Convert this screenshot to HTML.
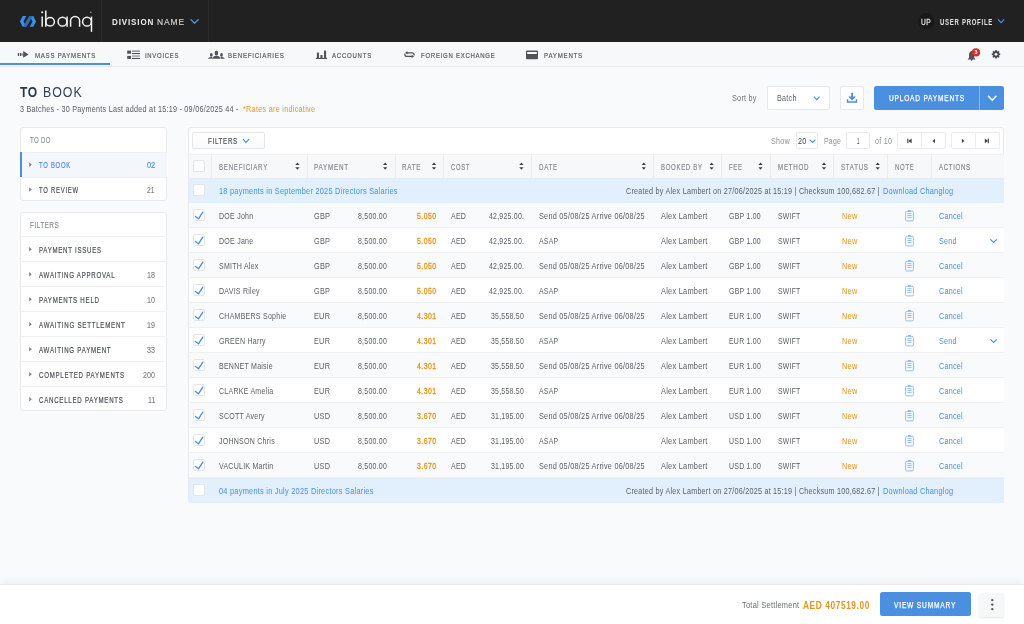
<!DOCTYPE html><html><head><meta charset="utf-8"><title>Mass Payments - To Book</title><style>
*{margin:0;padding:0;box-sizing:border-box}
html,body{width:1024px;height:624px;overflow:hidden}
body{position:relative;background:#f9fafc;font-family:"Liberation Sans",sans-serif}
#root{position:absolute;left:0;top:0;width:1024px;height:624px;will-change:transform}
.a{position:absolute}
.t{position:absolute;white-space:nowrap;transform-origin:0 0}
svg{position:absolute;left:0;top:0;overflow:visible}
</style></head><body><div id="root">
<div class="a" style="left:0px;top:0px;width:1024px;height:42px;background:#212121;"></div>
<div class="a" style="left:101px;top:0px;width:1px;height:42px;background:#2b2b2b;"></div>
<div class="a" style="left:208px;top:0px;width:1px;height:42px;background:#2b2b2b;"></div>
<svg width="1024" height="42">
<polygon points="22.7,16 26.3,16 23.5,21.4 26.3,26.8 22.7,26.8 19.9,21.4" fill="#3b8fe6"/>
<polygon points="29.7,16 33.3,16 36.1,21.4 33.3,26.8 29.7,26.8 32.5,21.4" fill="#3b8fe6"/>
<polygon points="29.2,16 32.8,16 26.6,26.8 23.0,26.8" fill="#2a6fbe"/>
<g fill="none" stroke="#f2f2f2" stroke-width="1.5">
<line x1="42.2" y1="16.4" x2="42.2" y2="26.8"/>
<line x1="45.8" y1="10.6" x2="45.8" y2="26.8"/>
<circle cx="50.1" cy="21.7" r="4.3"/>
<circle cx="62.5" cy="21.7" r="4.4"/>
<line x1="67.1" y1="16.6" x2="67.1" y2="26.8"/>
<path d="M70.6 26.8 V20.8 A4.5 4.4 0 0 1 79.6 20.8 V26.8"/>
<circle cx="87" cy="21.7" r="4.4"/>
<line x1="91.5" y1="16.6" x2="91.5" y2="31.8"/>
</g>
<circle cx="42.2" cy="12.2" r="1.05" fill="#f2f2f2"/>
<circle cx="90.8" cy="12.3" r="0.9" fill="#8a8a8a"/>
<polyline points="190.6,19.3 194.6,23.3 198.6,19.3" fill="none" stroke="#4a8fe0" stroke-width="1.4"/>
<circle cx="926.3" cy="21.3" r="8.2" fill="#191919"/>
<polyline points="998,19.4 1001.1,22.6 1004.2,19.4" fill="none" stroke="#4a8fe0" stroke-width="1.3"/>
</svg>
<div class="t" style="left:112.00px;top:12.00px;font-size:9.3px;line-height:20px;font-weight:bold;color:#ececec;letter-spacing:1.0px;transform:scaleX(0.8635)">DIVISION</div>
<div class="t" style="left:157.10px;top:12.00px;font-size:9.3px;line-height:20px;font-weight:normal;color:#d6d6d6;letter-spacing:1.0px;-webkit-text-stroke:0.15px #d6d6d6;transform:scaleX(0.9104)">NAME</div>
<div class="t" style="left:921.30px;top:12.00px;font-size:8.3px;line-height:20px;font-weight:normal;color:#dddddd;letter-spacing:0.6px;-webkit-text-stroke:0.3px #dddddd;transform:scaleX(0.7992)">UP</div>
<div class="t" style="left:939.70px;top:12.00px;font-size:8.3px;line-height:20px;font-weight:bold;color:#e2e2e2;letter-spacing:1.0px;transform:scaleX(0.7230)">USER PROFILE</div>
<div class="a" style="left:0px;top:42px;width:1024px;height:24px;background:#f7f8fa;"></div>
<div class="a" style="left:0px;top:66px;width:1024px;height:1px;background:#e8eaed;"></div>
<div class="a" style="left:0px;top:63px;width:110px;height:2px;background:#4a8fe0;"></div>
<div class="t" style="left:34.60px;top:46.00px;font-size:8.1px;line-height:20px;font-weight:normal;color:#54575c;letter-spacing:1.0px;-webkit-text-stroke:0.2px #54575c;transform:scaleX(0.7497)">MASS PAYMENTS</div>
<div class="t" style="left:144.60px;top:46.00px;font-size:8.1px;line-height:20px;font-weight:normal;color:#54575c;letter-spacing:1.0px;-webkit-text-stroke:0.2px #54575c;transform:scaleX(0.7306)">INVOICES</div>
<div class="t" style="left:227.60px;top:46.00px;font-size:8.1px;line-height:20px;font-weight:normal;color:#54575c;letter-spacing:1.0px;-webkit-text-stroke:0.2px #54575c;transform:scaleX(0.7575)">BENEFICIARIES</div>
<div class="t" style="left:332.20px;top:46.00px;font-size:8.1px;line-height:20px;font-weight:normal;color:#54575c;letter-spacing:1.0px;-webkit-text-stroke:0.2px #54575c;transform:scaleX(0.7472)">ACCOUNTS</div>
<div class="t" style="left:420.60px;top:46.00px;font-size:8.1px;line-height:20px;font-weight:normal;color:#54575c;letter-spacing:1.0px;-webkit-text-stroke:0.2px #54575c;transform:scaleX(0.7409)">FOREIGN EXCHANGE</div>
<div class="t" style="left:543.60px;top:46.00px;font-size:8.1px;line-height:20px;font-weight:normal;color:#54575c;letter-spacing:1.0px;-webkit-text-stroke:0.2px #54575c;transform:scaleX(0.7586)">PAYMENTS</div>
<svg width="1024" height="70">
<g fill="#505357">
<rect x="17.8" y="53.1" width="1.3" height="2.8" rx="0.5"/><rect x="19.9" y="53.1" width="1.3" height="2.8" rx="0.5"/><rect x="21.2" y="53.25" width="2.4" height="2.5" fill="#96999c"/>
<path d="M23.2 51.1 L28.6 54.45 L23.2 57.8 Z"/>
<rect x="127.2" y="50.6" width="3.8" height="3.1"/><rect x="127.2" y="55.9" width="3.8" height="3.0"/>
<rect x="132" y="50.6" width="7.9" height="1.1" opacity="0.85"/><rect x="132" y="53" width="7.9" height="1.1"/><rect x="132" y="55.4" width="7.9" height="1.3" opacity="0.6"/><rect x="132" y="57.9" width="7.9" height="1.1"/>
<ellipse cx="216.4" cy="53" rx="1.8" ry="2.5"/><path d="M212.1 58.8 Q212.6 56.1 216.4 55.7 Q220.2 56.1 220.7 58.8 Z"/>
<ellipse cx="211.3" cy="54.9" rx="1.4" ry="1.8"/><path d="M207.9 58.8 Q208.6 57 211.3 56.7 L212.4 56.9 L211.6 58.8 Z"/>
<ellipse cx="221.5" cy="54.9" rx="1.4" ry="1.8"/><path d="M224.9 58.8 Q224.2 57 221.5 56.7 L220.4 56.9 L221.2 58.8 Z"/>
<rect x="315.8" y="57.9" width="11.3" height="1.1"/><rect x="316.9" y="52.6" width="2.1" height="5.6" rx="0.5"/><rect x="320.4" y="55" width="2.1" height="3.2" rx="0.5"/><rect x="324" y="50.4" width="2.1" height="7.8" rx="0.5"/>
<path d="M526 51.6 Q526 50.6 527 50.6 L537 50.6 Q538 50.6 538 51.6 L538 58.2 Q538 59.2 537 59.2 L527 59.2 Q526 59.2 526 58.2 Z M527.2 52 L527.2 54 L536.8 54 L536.8 52 Z" fill-rule="evenodd"/>
<path d="M967.7 59.4 L969 57.8 V55.2 Q969 51.6 971.6 51.1 Q974.2 51.6 974.2 55.2 V57.8 L975.5 59.4 Z"/>
<circle cx="971.6" cy="59.7" r="0.95"/>
</g>
<g fill="none" stroke="#505357" stroke-width="1.2">
<path d="M414.1 55.6 V54.8 A2 2 0 0 0 412.1 52.8 H406.8"/>
<path d="M404.9 53.6 V54.4 A2 2 0 0 0 406.9 56.4 H412.3"/>
</g>
<path d="M405.1 52.8 L407.5 51.1 L407.5 54.5 Z M414.1 56.4 L411.7 54.7 L411.7 58.1 Z" fill="#505357"/>
<circle cx="976" cy="52.4" r="4.1" fill="#d82b2b"/>
<text x="976.1" y="54.3" font-size="5.4" font-weight="bold" fill="#fff" text-anchor="middle" font-family="Liberation Sans">3</text>
<g transform="translate(996 54.3)" fill="#45484c">
<circle r="3.0"/>
<rect x="-0.9" y="-4.2" width="1.8" height="8.4"/>
<rect x="-0.9" y="-4.2" width="1.8" height="8.4" transform="rotate(45)"/>
<rect x="-0.9" y="-4.2" width="1.8" height="8.4" transform="rotate(90)"/>
<rect x="-0.9" y="-4.2" width="1.8" height="8.4" transform="rotate(135)"/>
<circle r="1.4" fill="#f7f8fa"/>
</g>
</svg>
<div class="t" style="left:20.00px;top:82.00px;font-size:15.0px;line-height:20px;font-weight:bold;color:#28374a;letter-spacing:0.8px;transform:scaleX(0.8056)">TO</div>
<div class="t" style="left:43.40px;top:82.00px;font-size:15.0px;line-height:20px;font-weight:normal;color:#33435a;letter-spacing:1.2px;transform:scaleX(0.8243)">BOOK</div>
<div class="t" style="left:19.70px;top:99.00px;font-size:8.8px;line-height:20px;font-weight:normal;color:#575b60;letter-spacing:0.3px;transform:scaleX(0.8213)">3 Batches - 30 Payments Last added at 15:19 - 09/06/2025 44 -</div>
<div class="t" style="left:243.00px;top:99.00px;font-size:8.8px;line-height:20px;font-weight:normal;color:#e39a2a;letter-spacing:0.3px;transform:scaleX(0.8303)">*Rates are indicative</div>
<div class="t" style="left:732.40px;top:88.00px;font-size:8.8px;line-height:20px;font-weight:normal;color:#6b6f74;letter-spacing:0.3px;transform:scaleX(0.8256)">Sort by</div>
<div class="a" style="left:767px;top:86.2px;width:62.8px;height:24px;background:#fff;border:1px solid #e6e8eb;border-radius:2px"></div>
<div class="t" style="left:777.00px;top:88.00px;font-size:8.8px;line-height:20px;font-weight:normal;color:#5f6368;letter-spacing:0.3px;transform:scaleX(0.8226)">Batch</div>
<div class="a" style="left:840.3px;top:86.1px;width:24.2px;height:24px;background:#fff;border:1px solid #e6e8eb;border-radius:2px"></div>
<div class="a" style="left:874px;top:86px;width:130.3px;height:24px;background:#4a8fe0;border-radius:2.5px"></div>
<div class="a" style="left:979.4px;top:86px;width:1px;height:24px;background:#8ab8ee;"></div>
<div class="t" style="left:889.20px;top:88.00px;font-size:8.3px;line-height:20px;font-weight:normal;color:#ffffff;letter-spacing:1.0px;-webkit-text-stroke:0.25px #ffffff;transform:scaleX(0.7927)">UPLOAD PAYMENTS</div>
<svg width="1024" height="130">
<polyline points="813.8,96.6 816.7,99.7 819.6,96.6" fill="none" stroke="#4a8fe0" stroke-width="1.2"/>
<g fill="#4a8fe0"><rect x="851.2" y="92.8" width="1.8" height="4.6"/><path d="M848.2 96.6 L856 96.6 L852.1 100.6 Z"/><path d="M846.8 99.2 L848.3 99.2 L848.3 101.3 L855.7 101.3 L855.7 99.2 L857.2 99.2 L857.2 102.8 L846.8 102.8 Z"/></g>
<polyline points="988,95.8 992.2,100.2 996.4,95.8" fill="none" stroke="#fff" stroke-width="1.5"/>
</svg>
<div class="a" style="left:19.5px;top:127.4px;width:147.6px;height:74px;background:#fff;border:1px solid #e8eaed;border-radius:3px"></div>
<div class="a" style="left:20.5px;top:152px;width:146px;height:1px;background:#eef0f3;"></div>
<div class="a" style="left:20.5px;top:153px;width:146px;height:24px;background:#f3f7fc;"></div>
<div class="a" style="left:20px;top:152.2px;width:2px;height:24.8px;background:#4a8fe0;"></div>
<div class="a" style="left:20.5px;top:177px;width:146px;height:1px;background:#eef0f3;"></div>
<div class="t" style="left:29.50px;top:130.00px;font-size:8.4px;line-height:20px;font-weight:normal;color:#85898e;letter-spacing:0.5px;-webkit-text-stroke:0.1px #85898e;transform:scaleX(0.7208)">TO DO</div>
<svg width="200" height="420"><path d="M29.2 162.30 L31.8 164.60 L29.2 166.90 Z" fill="#7d8186"/></svg>
<div class="t" style="left:39.00px;top:156.00px;font-size:8.2px;line-height:20px;font-weight:normal;color:#4a8fe0;letter-spacing:1.0px;-webkit-text-stroke:0.2px #4a8fe0;transform:scaleX(0.7221)">TO BOOK</div>
<div class="t" style="left:146.80px;top:155.00px;font-size:8.4px;line-height:20px;font-weight:normal;color:#4a8fe0;letter-spacing:0px;-webkit-text-stroke:0.15px #4a8fe0;transform:scaleX(0.8775)">02</div>
<svg width="200" height="420"><path d="M29.2 187.20 L31.8 189.50 L29.2 191.80 Z" fill="#7d8186"/></svg>
<div class="t" style="left:39.00px;top:181.00px;font-size:8.2px;line-height:20px;font-weight:normal;color:#4e5257;letter-spacing:1.0px;-webkit-text-stroke:0.2px #4e5257;transform:scaleX(0.7260)">TO REVIEW</div>
<div class="t" style="left:147.00px;top:180.00px;font-size:8.4px;line-height:20px;font-weight:normal;color:#7b7f84;letter-spacing:0px;-webkit-text-stroke:0.1px #7b7f84;transform:scaleX(0.7919)">21</div>
<div class="a" style="left:19.5px;top:212.3px;width:147.6px;height:199px;background:#fff;border:1px solid #e8eaed;border-radius:3px"></div>
<div class="t" style="left:29.60px;top:215.00px;font-size:8.4px;line-height:20px;font-weight:normal;color:#85898e;letter-spacing:0.5px;-webkit-text-stroke:0.1px #85898e;transform:scaleX(0.7829)">FILTERS</div>
<div class="a" style="left:20.5px;top:236.1px;width:146px;height:1px;background:#eef0f3;"></div>
<svg width="200" height="420"><path d="M29.2 247.00 L31.8 249.30 L29.2 251.60 Z" fill="#7d8186"/></svg>
<div class="t" style="left:39.20px;top:241.00px;font-size:8.2px;line-height:20px;font-weight:normal;color:#4e5257;letter-spacing:1.0px;-webkit-text-stroke:0.2px #4e5257;transform:scaleX(0.7426)">PAYMENT ISSUES</div>
<div class="a" style="left:20.5px;top:261.1px;width:146px;height:1px;background:#eef0f3;"></div>
<svg width="200" height="420"><path d="M29.2 272.00 L31.8 274.30 L29.2 276.60 Z" fill="#7d8186"/></svg>
<div class="t" style="left:39.20px;top:266.00px;font-size:8.2px;line-height:20px;font-weight:normal;color:#4e5257;letter-spacing:1.0px;-webkit-text-stroke:0.2px #4e5257;transform:scaleX(0.7468)">AWAITING APPROVAL</div>
<div class="t" style="left:147.16px;top:265.00px;font-size:8.4px;line-height:20px;font-weight:normal;color:#7b7f84;letter-spacing:0px;-webkit-text-stroke:0.1px #7b7f84;transform:scaleX(0.8500)">18</div>
<div class="a" style="left:20.5px;top:286.1px;width:146px;height:1px;background:#eef0f3;"></div>
<svg width="200" height="420"><path d="M29.2 297.00 L31.8 299.30 L29.2 301.60 Z" fill="#7d8186"/></svg>
<div class="t" style="left:39.20px;top:291.00px;font-size:8.2px;line-height:20px;font-weight:normal;color:#4e5257;letter-spacing:1.0px;-webkit-text-stroke:0.2px #4e5257;transform:scaleX(0.7509)">PAYMENTS HELD</div>
<div class="t" style="left:147.16px;top:290.00px;font-size:8.4px;line-height:20px;font-weight:normal;color:#7b7f84;letter-spacing:0px;-webkit-text-stroke:0.1px #7b7f84;transform:scaleX(0.8500)">10</div>
<div class="a" style="left:20.5px;top:311.1px;width:146px;height:1px;background:#eef0f3;"></div>
<svg width="200" height="420"><path d="M29.2 322.00 L31.8 324.30 L29.2 326.60 Z" fill="#7d8186"/></svg>
<div class="t" style="left:39.20px;top:316.00px;font-size:8.2px;line-height:20px;font-weight:normal;color:#4e5257;letter-spacing:1.0px;-webkit-text-stroke:0.2px #4e5257;transform:scaleX(0.7515)">AWAITING SETTLEMENT</div>
<div class="t" style="left:147.16px;top:315.00px;font-size:8.4px;line-height:20px;font-weight:normal;color:#7b7f84;letter-spacing:0px;-webkit-text-stroke:0.1px #7b7f84;transform:scaleX(0.8500)">19</div>
<div class="a" style="left:20.5px;top:336.1px;width:146px;height:1px;background:#eef0f3;"></div>
<svg width="200" height="420"><path d="M29.2 347.00 L31.8 349.30 L29.2 351.60 Z" fill="#7d8186"/></svg>
<div class="t" style="left:39.20px;top:341.00px;font-size:8.2px;line-height:20px;font-weight:normal;color:#4e5257;letter-spacing:1.0px;-webkit-text-stroke:0.2px #4e5257;transform:scaleX(0.7498)">AWAITING PAYMENT</div>
<div class="t" style="left:147.16px;top:340.00px;font-size:8.4px;line-height:20px;font-weight:normal;color:#7b7f84;letter-spacing:0px;-webkit-text-stroke:0.1px #7b7f84;transform:scaleX(0.8500)">33</div>
<div class="a" style="left:20.5px;top:361.1px;width:146px;height:1px;background:#eef0f3;"></div>
<svg width="200" height="420"><path d="M29.2 372.00 L31.8 374.30 L29.2 376.60 Z" fill="#7d8186"/></svg>
<div class="t" style="left:39.20px;top:366.00px;font-size:8.2px;line-height:20px;font-weight:normal;color:#4e5257;letter-spacing:1.0px;-webkit-text-stroke:0.2px #4e5257;transform:scaleX(0.7461)">COMPLETED PAYMENTS</div>
<div class="t" style="left:143.19px;top:365.00px;font-size:8.4px;line-height:20px;font-weight:normal;color:#7b7f84;letter-spacing:0px;-webkit-text-stroke:0.1px #7b7f84;transform:scaleX(0.8500)">200</div>
<div class="a" style="left:20.5px;top:386.1px;width:146px;height:1px;background:#eef0f3;"></div>
<svg width="200" height="420"><path d="M29.2 397.00 L31.8 399.30 L29.2 401.60 Z" fill="#7d8186"/></svg>
<div class="t" style="left:39.20px;top:391.00px;font-size:8.2px;line-height:20px;font-weight:normal;color:#4e5257;letter-spacing:1.0px;-webkit-text-stroke:0.2px #4e5257;transform:scaleX(0.7474)">CANCELLED PAYMENTS</div>
<div class="t" style="left:147.69px;top:390.00px;font-size:8.4px;line-height:20px;font-weight:normal;color:#7b7f84;letter-spacing:0px;-webkit-text-stroke:0.1px #7b7f84;transform:scaleX(0.8500)">11</div>
<div class="a" style="left:187.5px;top:127.4px;width:816.8px;height:375.6px;background:#fff;border:1px solid #e8eaed;border-radius:3px"></div>
<div class="a" style="left:192.2px;top:132.2px;width:72.4px;height:16.9px;background:linear-gradient(#ffffff,#f9fafb);border:1px solid #e4e6e9;border-radius:2px"></div>
<div class="t" style="left:207.80px;top:131.00px;font-size:8.3px;line-height:20px;font-weight:normal;color:#4f5358;letter-spacing:1.0px;-webkit-text-stroke:0.2px #4f5358;transform:scaleX(0.7390)">FILTERS</div>
<svg width="1024" height="160"><polyline points="243,139.2 246,142.3 249,139.2" fill="none" stroke="#4a8fe0" stroke-width="1.2"/></svg>
<div class="t" style="left:770.90px;top:131.00px;font-size:8.8px;line-height:20px;font-weight:normal;color:#8d9196;letter-spacing:0.3px;transform:scaleX(0.8150)">Show</div>
<div class="a" style="left:795.5px;top:132.2px;width:22.9px;height:17.2px;background:#fff;border:1px solid #e8eaed;border-radius:2px"></div>
<div class="t" style="left:797.80px;top:131.00px;font-size:8.8px;line-height:20px;font-weight:normal;color:#3d4146;letter-spacing:0.3px;transform:scaleX(0.8127)">20</div>
<svg width="1024" height="160"><polyline points="809.6,139.6 812.5,142.5 815.4,139.6" fill="none" stroke="#4a8fe0" stroke-width="1.1"/></svg>
<div class="t" style="left:823.60px;top:131.00px;font-size:8.8px;line-height:20px;font-weight:normal;color:#8d9196;letter-spacing:0.3px;transform:scaleX(0.7880)">Page</div>
<div class="a" style="left:846.3px;top:132.2px;width:24.2px;height:17.2px;background:#fff;border:1px solid #e8eaed;border-radius:2px"></div>
<div class="t" style="left:857.00px;top:131.00px;font-size:8.8px;line-height:20px;font-weight:normal;color:#3d4146;letter-spacing:0.3px;transform:scaleX(0.4914)">1</div>
<div class="t" style="left:875.10px;top:131.00px;font-size:8.8px;line-height:20px;font-weight:normal;color:#8d9196;letter-spacing:0.3px;transform:scaleX(0.8133)">of 10</div>
<div class="a" style="left:897.3px;top:132.2px;width:48.700000000000045px;height:17.2px;background:#fff;border:1px solid #eaecef;border-radius:2px"></div>
<div class="a" style="left:921.4px;top:132.7px;width:1px;height:16.2px;background:#eaecef;"></div>
<div class="a" style="left:951.2px;top:132.2px;width:48.59999999999991px;height:17.2px;background:#fff;border:1px solid #eaecef;border-radius:2px"></div>
<div class="a" style="left:974.9px;top:132.7px;width:1px;height:16.2px;background:#eaecef;"></div>
<svg width="1024" height="160"><g fill="#3d4146">
<rect x="907.3" y="138.6" width="1.1" height="4.6"/><path d="M911.6 138.6 L908.3 140.9 L911.6 143.2 Z"/>
<path d="M935 138.8 L932.5 140.9 L935 143 Z"/>
<path d="M961.9 138.8 L964.4 140.9 L961.9 143 Z"/>
<path d="M984.8 138.6 L988.1 140.9 L984.8 143.2 Z"/><rect x="987.8" y="138.6" width="1.1" height="4.6"/>
</g></svg>
<div class="a" style="left:188.5px;top:154px;width:815px;height:24px;background:#f7f8fa;border-top:1px solid #eef0f3"></div>
<div class="a" style="left:210.5px;top:155px;width:1px;height:23px;background:#eaecef;"></div>
<div class="a" style="left:307.1px;top:155px;width:1px;height:23px;background:#eaecef;"></div>
<div class="a" style="left:394.5px;top:155px;width:1px;height:23px;background:#eaecef;"></div>
<div class="a" style="left:442.8px;top:155px;width:1px;height:23px;background:#eaecef;"></div>
<div class="a" style="left:531.2px;top:155px;width:1px;height:23px;background:#eaecef;"></div>
<div class="a" style="left:653.0px;top:155px;width:1px;height:23px;background:#eaecef;"></div>
<div class="a" style="left:720.9px;top:155px;width:1px;height:23px;background:#eaecef;"></div>
<div class="a" style="left:770.0px;top:155px;width:1px;height:23px;background:#eaecef;"></div>
<div class="a" style="left:833.2px;top:155px;width:1px;height:23px;background:#eaecef;"></div>
<div class="a" style="left:886.9px;top:155px;width:1px;height:23px;background:#eaecef;"></div>
<div class="a" style="left:931.1px;top:155px;width:1px;height:23px;background:#eaecef;"></div>
<div class="t" style="left:218.80px;top:157.00px;font-size:8.3px;line-height:20px;font-weight:normal;color:#878b90;letter-spacing:1.0px;-webkit-text-stroke:0.2px #878b90;transform:scaleX(0.7409)">BENEFICIARY</div>
<div class="t" style="left:314.40px;top:157.00px;font-size:8.3px;line-height:20px;font-weight:normal;color:#878b90;letter-spacing:1.0px;-webkit-text-stroke:0.2px #878b90;transform:scaleX(0.7619)">PAYMENT</div>
<div class="t" style="left:402.30px;top:157.00px;font-size:8.3px;line-height:20px;font-weight:normal;color:#878b90;letter-spacing:1.0px;-webkit-text-stroke:0.2px #878b90;transform:scaleX(0.7464)">RATE</div>
<div class="t" style="left:451.00px;top:157.00px;font-size:8.3px;line-height:20px;font-weight:normal;color:#878b90;letter-spacing:1.0px;-webkit-text-stroke:0.2px #878b90;transform:scaleX(0.7062)">COST</div>
<div class="t" style="left:539.00px;top:157.00px;font-size:8.3px;line-height:20px;font-weight:normal;color:#878b90;letter-spacing:1.0px;-webkit-text-stroke:0.2px #878b90;transform:scaleX(0.7382)">DATE</div>
<div class="t" style="left:660.90px;top:157.00px;font-size:8.3px;line-height:20px;font-weight:normal;color:#878b90;letter-spacing:1.0px;-webkit-text-stroke:0.2px #878b90;transform:scaleX(0.7207)">BOOKED BY</div>
<div class="t" style="left:729.20px;top:157.00px;font-size:8.3px;line-height:20px;font-weight:normal;color:#878b90;letter-spacing:1.0px;-webkit-text-stroke:0.2px #878b90;transform:scaleX(0.7165)">FEE</div>
<div class="t" style="left:777.80px;top:157.00px;font-size:8.3px;line-height:20px;font-weight:normal;color:#878b90;letter-spacing:1.0px;-webkit-text-stroke:0.2px #878b90;transform:scaleX(0.7446)">METHOD</div>
<div class="t" style="left:841.00px;top:157.00px;font-size:8.3px;line-height:20px;font-weight:normal;color:#878b90;letter-spacing:1.0px;-webkit-text-stroke:0.2px #878b90;transform:scaleX(0.7366)">STATUS</div>
<div class="t" style="left:895.00px;top:157.00px;font-size:8.3px;line-height:20px;font-weight:normal;color:#878b90;letter-spacing:1.0px;-webkit-text-stroke:0.2px #878b90;transform:scaleX(0.7216)">NOTE</div>
<div class="t" style="left:939.00px;top:157.00px;font-size:8.3px;line-height:20px;font-weight:normal;color:#878b90;letter-spacing:1.0px;-webkit-text-stroke:0.2px #878b90;transform:scaleX(0.7227)">ACTIONS</div>
<svg width="1024" height="180"><g fill="#3d4044"><path d="M295.30 165 L297.40 162.5 L299.50 165 Z"/><path d="M295.30 167.2 L297.40 169.7 L299.50 167.2 Z"/><path d="M383.10 165 L385.20 162.5 L387.30 165 Z"/><path d="M383.10 167.2 L385.20 169.7 L387.30 167.2 Z"/><path d="M431.90 165 L434.00 162.5 L436.10 165 Z"/><path d="M431.90 167.2 L434.00 169.7 L436.10 167.2 Z"/><path d="M519.30 165 L521.40 162.5 L523.50 165 Z"/><path d="M519.30 167.2 L521.40 169.7 L523.50 167.2 Z"/><path d="M641.70 165 L643.80 162.5 L645.90 165 Z"/><path d="M641.70 167.2 L643.80 169.7 L645.90 167.2 Z"/><path d="M709.50 165 L711.60 162.5 L713.70 165 Z"/><path d="M709.50 167.2 L711.60 169.7 L713.70 167.2 Z"/><path d="M758.40 165 L760.50 162.5 L762.60 165 Z"/><path d="M758.40 167.2 L760.50 169.7 L762.60 167.2 Z"/><path d="M821.90 165 L824.00 162.5 L826.10 165 Z"/><path d="M821.90 167.2 L824.00 169.7 L826.10 167.2 Z"/><path d="M875.60 165 L877.70 162.5 L879.80 165 Z"/><path d="M875.60 167.2 L877.70 169.7 L879.80 167.2 Z"/></g></svg>
<div class="a" style="left:193.4px;top:160.3px;width:12px;height:12px;background:#fff;border:1px solid #e3e5e8;border-radius:2px"></div>
<div class="a" style="left:188.5px;top:178px;width:815px;height:25px;background:#e2effc;border-top:1px solid #e4ebf3"></div>
<div class="a" style="left:193.4px;top:184.4px;width:12px;height:12px;background:#fff;border:1px solid #e3e5e8;border-radius:2px"></div>
<div class="t" style="left:219.40px;top:181.00px;font-size:8.8px;line-height:20px;font-weight:normal;color:#4a8fe0;letter-spacing:0.3px;transform:scaleX(0.8378)">18 payments in September 2025 Directors Salaries</div>
<div class="t" style="left:626.00px;top:181.00px;font-size:8.8px;line-height:20px;font-weight:normal;color:#5a5e63;letter-spacing:0.3px;transform:scaleX(0.8171)">Created by Alex Lambert on 27/06/2025 at 15:19 | Checksum 100,682.67 |</div>
<div class="t" style="left:883.10px;top:181.00px;font-size:8.8px;line-height:20px;font-weight:normal;color:#4a8fe0;letter-spacing:0.3px;transform:scaleX(0.8339)">Download Changlog</div>
<div class="a" style="left:188.5px;top:203px;width:815px;height:25px;background:#f9fafc;"></div>
<div class="a" style="left:188.5px;top:227px;width:815px;height:1px;background:#eef0f3;"></div>
<div class="a" style="left:193.4px;top:209.4px;width:12px;height:12px;background:#fff;border:1px solid #e3e5e8;border-radius:2px"></div>
<svg width="220" height="520"><polyline points="195.4,216.50 198.5,218.80 202.8,212.10" fill="none" stroke="#4a8fe0" stroke-width="1.35" stroke-linecap="round" stroke-linejoin="round"/></svg>
<div class="t" style="left:219.00px;top:206.00px;font-size:8.8px;line-height:20px;font-weight:normal;color:#5a5e63;letter-spacing:0.3px;transform:scaleX(0.8000)">DOE John</div>
<div class="t" style="left:314.40px;top:206.00px;font-size:8.8px;line-height:20px;font-weight:normal;color:#5a5e63;letter-spacing:0.3px;transform:scaleX(0.8286)">GBP</div>
<div class="t" style="left:358.40px;top:206.00px;font-size:8.8px;line-height:20px;font-weight:normal;color:#5a5e63;letter-spacing:0.3px;transform:scaleX(0.7922)">8,500.00</div>
<div class="t" style="left:417.40px;top:206.00px;font-size:8.8px;line-height:20px;font-weight:normal;color:#e3961f;letter-spacing:0.6px;-webkit-text-stroke:0.35px #e3961f;transform:scaleX(0.7821)">5.050</div>
<div class="t" style="left:451.00px;top:206.00px;font-size:8.8px;line-height:20px;font-weight:normal;color:#5a5e63;letter-spacing:0.3px;transform:scaleX(0.7921)">AED</div>
<div class="t" style="left:488.90px;top:206.00px;font-size:8.8px;line-height:20px;font-weight:normal;color:#5a5e63;letter-spacing:0.3px;transform:scaleX(0.7900)">42,925.00.</div>
<div class="t" style="left:538.70px;top:206.00px;font-size:8.8px;line-height:20px;font-weight:normal;color:#5a5e63;letter-spacing:0.3px;transform:scaleX(0.8296)">Send 05/08/25 Arrive 06/08/25</div>
<div class="t" style="left:661.10px;top:206.00px;font-size:8.8px;line-height:20px;font-weight:normal;color:#5a5e63;letter-spacing:0.3px;transform:scaleX(0.8413)">Alex Lambert</div>
<div class="t" style="left:729.00px;top:206.00px;font-size:8.8px;line-height:20px;font-weight:normal;color:#5a5e63;letter-spacing:0.3px;transform:scaleX(0.7900)">GBP 1.00</div>
<div class="t" style="left:777.70px;top:206.00px;font-size:8.8px;line-height:20px;font-weight:normal;color:#5a5e63;letter-spacing:0.3px;transform:scaleX(0.7806)">SWIFT</div>
<div class="t" style="left:841.50px;top:206.00px;font-size:8.8px;line-height:20px;font-weight:normal;color:#e3961f;letter-spacing:0.3px;transform:scaleX(0.8342)">New</div>
<div class="t" style="left:938.70px;top:206.00px;font-size:8.8px;line-height:20px;font-weight:normal;color:#4a8fe0;letter-spacing:0.3px;transform:scaleX(0.8200)">Cancel</div>
<div class="a" style="left:188.5px;top:228px;width:815px;height:25px;background:#ffffff;"></div>
<div class="a" style="left:188.5px;top:252px;width:815px;height:1px;background:#eef0f3;"></div>
<div class="a" style="left:193.4px;top:234.4px;width:12px;height:12px;background:#fff;border:1px solid #e3e5e8;border-radius:2px"></div>
<svg width="220" height="520"><polyline points="195.4,241.50 198.5,243.80 202.8,237.10" fill="none" stroke="#4a8fe0" stroke-width="1.35" stroke-linecap="round" stroke-linejoin="round"/></svg>
<div class="t" style="left:219.00px;top:231.00px;font-size:8.8px;line-height:20px;font-weight:normal;color:#5a5e63;letter-spacing:0.3px;transform:scaleX(0.8000)">DOE Jane</div>
<div class="t" style="left:314.40px;top:231.00px;font-size:8.8px;line-height:20px;font-weight:normal;color:#5a5e63;letter-spacing:0.3px;transform:scaleX(0.8286)">GBP</div>
<div class="t" style="left:358.40px;top:231.00px;font-size:8.8px;line-height:20px;font-weight:normal;color:#5a5e63;letter-spacing:0.3px;transform:scaleX(0.7922)">8,500.00</div>
<div class="t" style="left:417.40px;top:231.00px;font-size:8.8px;line-height:20px;font-weight:normal;color:#e3961f;letter-spacing:0.6px;-webkit-text-stroke:0.35px #e3961f;transform:scaleX(0.7821)">5.050</div>
<div class="t" style="left:451.00px;top:231.00px;font-size:8.8px;line-height:20px;font-weight:normal;color:#5a5e63;letter-spacing:0.3px;transform:scaleX(0.7921)">AED</div>
<div class="t" style="left:488.90px;top:231.00px;font-size:8.8px;line-height:20px;font-weight:normal;color:#5a5e63;letter-spacing:0.3px;transform:scaleX(0.7900)">42,925.00.</div>
<div class="t" style="left:538.70px;top:231.00px;font-size:8.8px;line-height:20px;font-weight:normal;color:#5a5e63;letter-spacing:0.3px;transform:scaleX(0.7836)">ASAP</div>
<div class="t" style="left:661.10px;top:231.00px;font-size:8.8px;line-height:20px;font-weight:normal;color:#5a5e63;letter-spacing:0.3px;transform:scaleX(0.8413)">Alex Lambert</div>
<div class="t" style="left:729.00px;top:231.00px;font-size:8.8px;line-height:20px;font-weight:normal;color:#5a5e63;letter-spacing:0.3px;transform:scaleX(0.7900)">GBP 1.00</div>
<div class="t" style="left:777.70px;top:231.00px;font-size:8.8px;line-height:20px;font-weight:normal;color:#5a5e63;letter-spacing:0.3px;transform:scaleX(0.7806)">SWIFT</div>
<div class="t" style="left:841.50px;top:231.00px;font-size:8.8px;line-height:20px;font-weight:normal;color:#e3961f;letter-spacing:0.3px;transform:scaleX(0.8342)">New</div>
<div class="t" style="left:938.70px;top:231.00px;font-size:8.8px;line-height:20px;font-weight:normal;color:#4a8fe0;letter-spacing:0.3px;transform:scaleX(0.8200)">Send</div>
<div class="a" style="left:188.5px;top:253px;width:815px;height:25px;background:#f9fafc;"></div>
<div class="a" style="left:188.5px;top:277px;width:815px;height:1px;background:#eef0f3;"></div>
<div class="a" style="left:193.4px;top:259.4px;width:12px;height:12px;background:#fff;border:1px solid #e3e5e8;border-radius:2px"></div>
<svg width="220" height="520"><polyline points="195.4,266.50 198.5,268.80 202.8,262.10" fill="none" stroke="#4a8fe0" stroke-width="1.35" stroke-linecap="round" stroke-linejoin="round"/></svg>
<div class="t" style="left:219.00px;top:256.00px;font-size:8.8px;line-height:20px;font-weight:normal;color:#5a5e63;letter-spacing:0.3px;transform:scaleX(0.8000)">SMITH Alex</div>
<div class="t" style="left:314.40px;top:256.00px;font-size:8.8px;line-height:20px;font-weight:normal;color:#5a5e63;letter-spacing:0.3px;transform:scaleX(0.8286)">GBP</div>
<div class="t" style="left:358.40px;top:256.00px;font-size:8.8px;line-height:20px;font-weight:normal;color:#5a5e63;letter-spacing:0.3px;transform:scaleX(0.7922)">8,500.00</div>
<div class="t" style="left:417.40px;top:256.00px;font-size:8.8px;line-height:20px;font-weight:normal;color:#e3961f;letter-spacing:0.6px;-webkit-text-stroke:0.35px #e3961f;transform:scaleX(0.7821)">5.050</div>
<div class="t" style="left:451.00px;top:256.00px;font-size:8.8px;line-height:20px;font-weight:normal;color:#5a5e63;letter-spacing:0.3px;transform:scaleX(0.7921)">AED</div>
<div class="t" style="left:488.90px;top:256.00px;font-size:8.8px;line-height:20px;font-weight:normal;color:#5a5e63;letter-spacing:0.3px;transform:scaleX(0.7900)">42,925.00.</div>
<div class="t" style="left:538.70px;top:256.00px;font-size:8.8px;line-height:20px;font-weight:normal;color:#5a5e63;letter-spacing:0.3px;transform:scaleX(0.8296)">Send 05/08/25 Arrive 06/08/25</div>
<div class="t" style="left:661.10px;top:256.00px;font-size:8.8px;line-height:20px;font-weight:normal;color:#5a5e63;letter-spacing:0.3px;transform:scaleX(0.8413)">Alex Lambert</div>
<div class="t" style="left:729.00px;top:256.00px;font-size:8.8px;line-height:20px;font-weight:normal;color:#5a5e63;letter-spacing:0.3px;transform:scaleX(0.7900)">GBP 1.00</div>
<div class="t" style="left:777.70px;top:256.00px;font-size:8.8px;line-height:20px;font-weight:normal;color:#5a5e63;letter-spacing:0.3px;transform:scaleX(0.7806)">SWIFT</div>
<div class="t" style="left:841.50px;top:256.00px;font-size:8.8px;line-height:20px;font-weight:normal;color:#e3961f;letter-spacing:0.3px;transform:scaleX(0.8342)">New</div>
<div class="t" style="left:938.70px;top:256.00px;font-size:8.8px;line-height:20px;font-weight:normal;color:#4a8fe0;letter-spacing:0.3px;transform:scaleX(0.8200)">Cancel</div>
<div class="a" style="left:188.5px;top:278px;width:815px;height:25px;background:#ffffff;"></div>
<div class="a" style="left:188.5px;top:302px;width:815px;height:1px;background:#eef0f3;"></div>
<div class="a" style="left:193.4px;top:284.4px;width:12px;height:12px;background:#fff;border:1px solid #e3e5e8;border-radius:2px"></div>
<svg width="220" height="520"><polyline points="195.4,291.50 198.5,293.80 202.8,287.10" fill="none" stroke="#4a8fe0" stroke-width="1.35" stroke-linecap="round" stroke-linejoin="round"/></svg>
<div class="t" style="left:219.00px;top:281.00px;font-size:8.8px;line-height:20px;font-weight:normal;color:#5a5e63;letter-spacing:0.3px;transform:scaleX(0.8000)">DAVIS Riley</div>
<div class="t" style="left:314.40px;top:281.00px;font-size:8.8px;line-height:20px;font-weight:normal;color:#5a5e63;letter-spacing:0.3px;transform:scaleX(0.8286)">GBP</div>
<div class="t" style="left:358.40px;top:281.00px;font-size:8.8px;line-height:20px;font-weight:normal;color:#5a5e63;letter-spacing:0.3px;transform:scaleX(0.7922)">8,500.00</div>
<div class="t" style="left:417.40px;top:281.00px;font-size:8.8px;line-height:20px;font-weight:normal;color:#e3961f;letter-spacing:0.6px;-webkit-text-stroke:0.35px #e3961f;transform:scaleX(0.7821)">5.050</div>
<div class="t" style="left:451.00px;top:281.00px;font-size:8.8px;line-height:20px;font-weight:normal;color:#5a5e63;letter-spacing:0.3px;transform:scaleX(0.7921)">AED</div>
<div class="t" style="left:488.90px;top:281.00px;font-size:8.8px;line-height:20px;font-weight:normal;color:#5a5e63;letter-spacing:0.3px;transform:scaleX(0.7900)">42,925.00.</div>
<div class="t" style="left:538.70px;top:281.00px;font-size:8.8px;line-height:20px;font-weight:normal;color:#5a5e63;letter-spacing:0.3px;transform:scaleX(0.7836)">ASAP</div>
<div class="t" style="left:661.10px;top:281.00px;font-size:8.8px;line-height:20px;font-weight:normal;color:#5a5e63;letter-spacing:0.3px;transform:scaleX(0.8413)">Alex Lambert</div>
<div class="t" style="left:729.00px;top:281.00px;font-size:8.8px;line-height:20px;font-weight:normal;color:#5a5e63;letter-spacing:0.3px;transform:scaleX(0.7900)">GBP 1.00</div>
<div class="t" style="left:777.70px;top:281.00px;font-size:8.8px;line-height:20px;font-weight:normal;color:#5a5e63;letter-spacing:0.3px;transform:scaleX(0.7806)">SWIFT</div>
<div class="t" style="left:841.50px;top:281.00px;font-size:8.8px;line-height:20px;font-weight:normal;color:#e3961f;letter-spacing:0.3px;transform:scaleX(0.8342)">New</div>
<div class="t" style="left:938.70px;top:281.00px;font-size:8.8px;line-height:20px;font-weight:normal;color:#4a8fe0;letter-spacing:0.3px;transform:scaleX(0.8200)">Cancel</div>
<div class="a" style="left:188.5px;top:303px;width:815px;height:25px;background:#f9fafc;"></div>
<div class="a" style="left:188.5px;top:327px;width:815px;height:1px;background:#eef0f3;"></div>
<div class="a" style="left:193.4px;top:309.4px;width:12px;height:12px;background:#fff;border:1px solid #e3e5e8;border-radius:2px"></div>
<svg width="220" height="520"><polyline points="195.4,316.50 198.5,318.80 202.8,312.10" fill="none" stroke="#4a8fe0" stroke-width="1.35" stroke-linecap="round" stroke-linejoin="round"/></svg>
<div class="t" style="left:219.00px;top:306.00px;font-size:8.8px;line-height:20px;font-weight:normal;color:#5a5e63;letter-spacing:0.3px;transform:scaleX(0.8000)">CHAMBERS Sophie</div>
<div class="t" style="left:314.40px;top:306.00px;font-size:8.8px;line-height:20px;font-weight:normal;color:#5a5e63;letter-spacing:0.3px;transform:scaleX(0.8300)">EUR</div>
<div class="t" style="left:358.40px;top:306.00px;font-size:8.8px;line-height:20px;font-weight:normal;color:#5a5e63;letter-spacing:0.3px;transform:scaleX(0.7922)">8,500.00</div>
<div class="t" style="left:417.40px;top:306.00px;font-size:8.8px;line-height:20px;font-weight:normal;color:#e3961f;letter-spacing:0.6px;-webkit-text-stroke:0.35px #e3961f;transform:scaleX(0.7821)">4.301</div>
<div class="t" style="left:451.00px;top:306.00px;font-size:8.8px;line-height:20px;font-weight:normal;color:#5a5e63;letter-spacing:0.3px;transform:scaleX(0.7921)">AED</div>
<div class="t" style="left:491.07px;top:306.00px;font-size:8.8px;line-height:20px;font-weight:normal;color:#5a5e63;letter-spacing:0.3px;transform:scaleX(0.7900)">35,558.50</div>
<div class="t" style="left:538.70px;top:306.00px;font-size:8.8px;line-height:20px;font-weight:normal;color:#5a5e63;letter-spacing:0.3px;transform:scaleX(0.8296)">Send 05/08/25 Arrive 06/08/25</div>
<div class="t" style="left:661.10px;top:306.00px;font-size:8.8px;line-height:20px;font-weight:normal;color:#5a5e63;letter-spacing:0.3px;transform:scaleX(0.8413)">Alex Lambert</div>
<div class="t" style="left:729.00px;top:306.00px;font-size:8.8px;line-height:20px;font-weight:normal;color:#5a5e63;letter-spacing:0.3px;transform:scaleX(0.7900)">EUR 1.00</div>
<div class="t" style="left:777.70px;top:306.00px;font-size:8.8px;line-height:20px;font-weight:normal;color:#5a5e63;letter-spacing:0.3px;transform:scaleX(0.7806)">SWIFT</div>
<div class="t" style="left:841.50px;top:306.00px;font-size:8.8px;line-height:20px;font-weight:normal;color:#e3961f;letter-spacing:0.3px;transform:scaleX(0.8342)">New</div>
<div class="t" style="left:938.70px;top:306.00px;font-size:8.8px;line-height:20px;font-weight:normal;color:#4a8fe0;letter-spacing:0.3px;transform:scaleX(0.8200)">Cancel</div>
<div class="a" style="left:188.5px;top:328px;width:815px;height:25px;background:#ffffff;"></div>
<div class="a" style="left:188.5px;top:352px;width:815px;height:1px;background:#eef0f3;"></div>
<div class="a" style="left:193.4px;top:334.4px;width:12px;height:12px;background:#fff;border:1px solid #e3e5e8;border-radius:2px"></div>
<svg width="220" height="520"><polyline points="195.4,341.50 198.5,343.80 202.8,337.10" fill="none" stroke="#4a8fe0" stroke-width="1.35" stroke-linecap="round" stroke-linejoin="round"/></svg>
<div class="t" style="left:219.00px;top:331.00px;font-size:8.8px;line-height:20px;font-weight:normal;color:#5a5e63;letter-spacing:0.3px;transform:scaleX(0.8000)">GREEN Harry</div>
<div class="t" style="left:314.40px;top:331.00px;font-size:8.8px;line-height:20px;font-weight:normal;color:#5a5e63;letter-spacing:0.3px;transform:scaleX(0.8300)">EUR</div>
<div class="t" style="left:358.40px;top:331.00px;font-size:8.8px;line-height:20px;font-weight:normal;color:#5a5e63;letter-spacing:0.3px;transform:scaleX(0.7922)">8,500.00</div>
<div class="t" style="left:417.40px;top:331.00px;font-size:8.8px;line-height:20px;font-weight:normal;color:#e3961f;letter-spacing:0.6px;-webkit-text-stroke:0.35px #e3961f;transform:scaleX(0.7821)">4.301</div>
<div class="t" style="left:451.00px;top:331.00px;font-size:8.8px;line-height:20px;font-weight:normal;color:#5a5e63;letter-spacing:0.3px;transform:scaleX(0.7921)">AED</div>
<div class="t" style="left:491.07px;top:331.00px;font-size:8.8px;line-height:20px;font-weight:normal;color:#5a5e63;letter-spacing:0.3px;transform:scaleX(0.7900)">35,558.50</div>
<div class="t" style="left:538.70px;top:331.00px;font-size:8.8px;line-height:20px;font-weight:normal;color:#5a5e63;letter-spacing:0.3px;transform:scaleX(0.7836)">ASAP</div>
<div class="t" style="left:661.10px;top:331.00px;font-size:8.8px;line-height:20px;font-weight:normal;color:#5a5e63;letter-spacing:0.3px;transform:scaleX(0.8413)">Alex Lambert</div>
<div class="t" style="left:729.00px;top:331.00px;font-size:8.8px;line-height:20px;font-weight:normal;color:#5a5e63;letter-spacing:0.3px;transform:scaleX(0.7900)">EUR 1.00</div>
<div class="t" style="left:777.70px;top:331.00px;font-size:8.8px;line-height:20px;font-weight:normal;color:#5a5e63;letter-spacing:0.3px;transform:scaleX(0.7806)">SWIFT</div>
<div class="t" style="left:841.50px;top:331.00px;font-size:8.8px;line-height:20px;font-weight:normal;color:#e3961f;letter-spacing:0.3px;transform:scaleX(0.8342)">New</div>
<div class="t" style="left:938.70px;top:331.00px;font-size:8.8px;line-height:20px;font-weight:normal;color:#4a8fe0;letter-spacing:0.3px;transform:scaleX(0.8200)">Send</div>
<div class="a" style="left:188.5px;top:353px;width:815px;height:25px;background:#f9fafc;"></div>
<div class="a" style="left:188.5px;top:377px;width:815px;height:1px;background:#eef0f3;"></div>
<div class="a" style="left:193.4px;top:359.4px;width:12px;height:12px;background:#fff;border:1px solid #e3e5e8;border-radius:2px"></div>
<svg width="220" height="520"><polyline points="195.4,366.50 198.5,368.80 202.8,362.10" fill="none" stroke="#4a8fe0" stroke-width="1.35" stroke-linecap="round" stroke-linejoin="round"/></svg>
<div class="t" style="left:219.00px;top:356.00px;font-size:8.8px;line-height:20px;font-weight:normal;color:#5a5e63;letter-spacing:0.3px;transform:scaleX(0.8000)">BENNET Maisie</div>
<div class="t" style="left:314.40px;top:356.00px;font-size:8.8px;line-height:20px;font-weight:normal;color:#5a5e63;letter-spacing:0.3px;transform:scaleX(0.8300)">EUR</div>
<div class="t" style="left:358.40px;top:356.00px;font-size:8.8px;line-height:20px;font-weight:normal;color:#5a5e63;letter-spacing:0.3px;transform:scaleX(0.7922)">8,500.00</div>
<div class="t" style="left:417.40px;top:356.00px;font-size:8.8px;line-height:20px;font-weight:normal;color:#e3961f;letter-spacing:0.6px;-webkit-text-stroke:0.35px #e3961f;transform:scaleX(0.7821)">4.301</div>
<div class="t" style="left:451.00px;top:356.00px;font-size:8.8px;line-height:20px;font-weight:normal;color:#5a5e63;letter-spacing:0.3px;transform:scaleX(0.7921)">AED</div>
<div class="t" style="left:491.07px;top:356.00px;font-size:8.8px;line-height:20px;font-weight:normal;color:#5a5e63;letter-spacing:0.3px;transform:scaleX(0.7900)">35,558.50</div>
<div class="t" style="left:538.70px;top:356.00px;font-size:8.8px;line-height:20px;font-weight:normal;color:#5a5e63;letter-spacing:0.3px;transform:scaleX(0.8296)">Send 05/08/25 Arrive 06/08/25</div>
<div class="t" style="left:661.10px;top:356.00px;font-size:8.8px;line-height:20px;font-weight:normal;color:#5a5e63;letter-spacing:0.3px;transform:scaleX(0.8413)">Alex Lambert</div>
<div class="t" style="left:729.00px;top:356.00px;font-size:8.8px;line-height:20px;font-weight:normal;color:#5a5e63;letter-spacing:0.3px;transform:scaleX(0.7900)">EUR 1.00</div>
<div class="t" style="left:777.70px;top:356.00px;font-size:8.8px;line-height:20px;font-weight:normal;color:#5a5e63;letter-spacing:0.3px;transform:scaleX(0.7806)">SWIFT</div>
<div class="t" style="left:841.50px;top:356.00px;font-size:8.8px;line-height:20px;font-weight:normal;color:#e3961f;letter-spacing:0.3px;transform:scaleX(0.8342)">New</div>
<div class="t" style="left:938.70px;top:356.00px;font-size:8.8px;line-height:20px;font-weight:normal;color:#4a8fe0;letter-spacing:0.3px;transform:scaleX(0.8200)">Cancel</div>
<div class="a" style="left:188.5px;top:378px;width:815px;height:25px;background:#ffffff;"></div>
<div class="a" style="left:188.5px;top:402px;width:815px;height:1px;background:#eef0f3;"></div>
<div class="a" style="left:193.4px;top:384.4px;width:12px;height:12px;background:#fff;border:1px solid #e3e5e8;border-radius:2px"></div>
<svg width="220" height="520"><polyline points="195.4,391.50 198.5,393.80 202.8,387.10" fill="none" stroke="#4a8fe0" stroke-width="1.35" stroke-linecap="round" stroke-linejoin="round"/></svg>
<div class="t" style="left:219.00px;top:381.00px;font-size:8.8px;line-height:20px;font-weight:normal;color:#5a5e63;letter-spacing:0.3px;transform:scaleX(0.8000)">CLARKE Amelia</div>
<div class="t" style="left:314.40px;top:381.00px;font-size:8.8px;line-height:20px;font-weight:normal;color:#5a5e63;letter-spacing:0.3px;transform:scaleX(0.8300)">EUR</div>
<div class="t" style="left:358.40px;top:381.00px;font-size:8.8px;line-height:20px;font-weight:normal;color:#5a5e63;letter-spacing:0.3px;transform:scaleX(0.7922)">8,500.00</div>
<div class="t" style="left:417.40px;top:381.00px;font-size:8.8px;line-height:20px;font-weight:normal;color:#e3961f;letter-spacing:0.6px;-webkit-text-stroke:0.35px #e3961f;transform:scaleX(0.7821)">4.301</div>
<div class="t" style="left:451.00px;top:381.00px;font-size:8.8px;line-height:20px;font-weight:normal;color:#5a5e63;letter-spacing:0.3px;transform:scaleX(0.7921)">AED</div>
<div class="t" style="left:491.07px;top:381.00px;font-size:8.8px;line-height:20px;font-weight:normal;color:#5a5e63;letter-spacing:0.3px;transform:scaleX(0.7900)">35,558.50</div>
<div class="t" style="left:538.70px;top:381.00px;font-size:8.8px;line-height:20px;font-weight:normal;color:#5a5e63;letter-spacing:0.3px;transform:scaleX(0.7836)">ASAP</div>
<div class="t" style="left:661.10px;top:381.00px;font-size:8.8px;line-height:20px;font-weight:normal;color:#5a5e63;letter-spacing:0.3px;transform:scaleX(0.8413)">Alex Lambert</div>
<div class="t" style="left:729.00px;top:381.00px;font-size:8.8px;line-height:20px;font-weight:normal;color:#5a5e63;letter-spacing:0.3px;transform:scaleX(0.7900)">EUR 1.00</div>
<div class="t" style="left:777.70px;top:381.00px;font-size:8.8px;line-height:20px;font-weight:normal;color:#5a5e63;letter-spacing:0.3px;transform:scaleX(0.7806)">SWIFT</div>
<div class="t" style="left:841.50px;top:381.00px;font-size:8.8px;line-height:20px;font-weight:normal;color:#e3961f;letter-spacing:0.3px;transform:scaleX(0.8342)">New</div>
<div class="t" style="left:938.70px;top:381.00px;font-size:8.8px;line-height:20px;font-weight:normal;color:#4a8fe0;letter-spacing:0.3px;transform:scaleX(0.8200)">Cancel</div>
<div class="a" style="left:188.5px;top:403px;width:815px;height:25px;background:#f9fafc;"></div>
<div class="a" style="left:188.5px;top:427px;width:815px;height:1px;background:#eef0f3;"></div>
<div class="a" style="left:193.4px;top:409.4px;width:12px;height:12px;background:#fff;border:1px solid #e3e5e8;border-radius:2px"></div>
<svg width="220" height="520"><polyline points="195.4,416.50 198.5,418.80 202.8,412.10" fill="none" stroke="#4a8fe0" stroke-width="1.35" stroke-linecap="round" stroke-linejoin="round"/></svg>
<div class="t" style="left:219.00px;top:406.00px;font-size:8.8px;line-height:20px;font-weight:normal;color:#5a5e63;letter-spacing:0.3px;transform:scaleX(0.8000)">SCOTT Avery</div>
<div class="t" style="left:314.40px;top:406.00px;font-size:8.8px;line-height:20px;font-weight:normal;color:#5a5e63;letter-spacing:0.3px;transform:scaleX(0.8300)">USD</div>
<div class="t" style="left:358.40px;top:406.00px;font-size:8.8px;line-height:20px;font-weight:normal;color:#5a5e63;letter-spacing:0.3px;transform:scaleX(0.7922)">8,500.00</div>
<div class="t" style="left:417.40px;top:406.00px;font-size:8.8px;line-height:20px;font-weight:normal;color:#e3961f;letter-spacing:0.6px;-webkit-text-stroke:0.35px #e3961f;transform:scaleX(0.7821)">3.670</div>
<div class="t" style="left:451.00px;top:406.00px;font-size:8.8px;line-height:20px;font-weight:normal;color:#5a5e63;letter-spacing:0.3px;transform:scaleX(0.7921)">AED</div>
<div class="t" style="left:491.07px;top:406.00px;font-size:8.8px;line-height:20px;font-weight:normal;color:#5a5e63;letter-spacing:0.3px;transform:scaleX(0.7900)">31,195.00</div>
<div class="t" style="left:538.70px;top:406.00px;font-size:8.8px;line-height:20px;font-weight:normal;color:#5a5e63;letter-spacing:0.3px;transform:scaleX(0.8296)">Send 05/08/25 Arrive 06/08/25</div>
<div class="t" style="left:661.10px;top:406.00px;font-size:8.8px;line-height:20px;font-weight:normal;color:#5a5e63;letter-spacing:0.3px;transform:scaleX(0.8413)">Alex Lambert</div>
<div class="t" style="left:729.00px;top:406.00px;font-size:8.8px;line-height:20px;font-weight:normal;color:#5a5e63;letter-spacing:0.3px;transform:scaleX(0.7900)">USD 1.00</div>
<div class="t" style="left:777.70px;top:406.00px;font-size:8.8px;line-height:20px;font-weight:normal;color:#5a5e63;letter-spacing:0.3px;transform:scaleX(0.7806)">SWIFT</div>
<div class="t" style="left:841.50px;top:406.00px;font-size:8.8px;line-height:20px;font-weight:normal;color:#e3961f;letter-spacing:0.3px;transform:scaleX(0.8342)">New</div>
<div class="t" style="left:938.70px;top:406.00px;font-size:8.8px;line-height:20px;font-weight:normal;color:#4a8fe0;letter-spacing:0.3px;transform:scaleX(0.8200)">Cancel</div>
<div class="a" style="left:188.5px;top:428px;width:815px;height:25px;background:#ffffff;"></div>
<div class="a" style="left:188.5px;top:452px;width:815px;height:1px;background:#eef0f3;"></div>
<div class="a" style="left:193.4px;top:434.4px;width:12px;height:12px;background:#fff;border:1px solid #e3e5e8;border-radius:2px"></div>
<svg width="220" height="520"><polyline points="195.4,441.50 198.5,443.80 202.8,437.10" fill="none" stroke="#4a8fe0" stroke-width="1.35" stroke-linecap="round" stroke-linejoin="round"/></svg>
<div class="t" style="left:219.00px;top:431.00px;font-size:8.8px;line-height:20px;font-weight:normal;color:#5a5e63;letter-spacing:0.3px;transform:scaleX(0.8000)">JOHNSON Chris</div>
<div class="t" style="left:314.40px;top:431.00px;font-size:8.8px;line-height:20px;font-weight:normal;color:#5a5e63;letter-spacing:0.3px;transform:scaleX(0.8300)">USD</div>
<div class="t" style="left:358.40px;top:431.00px;font-size:8.8px;line-height:20px;font-weight:normal;color:#5a5e63;letter-spacing:0.3px;transform:scaleX(0.7922)">8,500.00</div>
<div class="t" style="left:417.40px;top:431.00px;font-size:8.8px;line-height:20px;font-weight:normal;color:#e3961f;letter-spacing:0.6px;-webkit-text-stroke:0.35px #e3961f;transform:scaleX(0.7821)">3.670</div>
<div class="t" style="left:451.00px;top:431.00px;font-size:8.8px;line-height:20px;font-weight:normal;color:#5a5e63;letter-spacing:0.3px;transform:scaleX(0.7921)">AED</div>
<div class="t" style="left:491.07px;top:431.00px;font-size:8.8px;line-height:20px;font-weight:normal;color:#5a5e63;letter-spacing:0.3px;transform:scaleX(0.7900)">31,195.00</div>
<div class="t" style="left:538.70px;top:431.00px;font-size:8.8px;line-height:20px;font-weight:normal;color:#5a5e63;letter-spacing:0.3px;transform:scaleX(0.7836)">ASAP</div>
<div class="t" style="left:661.10px;top:431.00px;font-size:8.8px;line-height:20px;font-weight:normal;color:#5a5e63;letter-spacing:0.3px;transform:scaleX(0.8413)">Alex Lambert</div>
<div class="t" style="left:729.00px;top:431.00px;font-size:8.8px;line-height:20px;font-weight:normal;color:#5a5e63;letter-spacing:0.3px;transform:scaleX(0.7900)">USD 1.00</div>
<div class="t" style="left:777.70px;top:431.00px;font-size:8.8px;line-height:20px;font-weight:normal;color:#5a5e63;letter-spacing:0.3px;transform:scaleX(0.7806)">SWIFT</div>
<div class="t" style="left:841.50px;top:431.00px;font-size:8.8px;line-height:20px;font-weight:normal;color:#e3961f;letter-spacing:0.3px;transform:scaleX(0.8342)">New</div>
<div class="t" style="left:938.70px;top:431.00px;font-size:8.8px;line-height:20px;font-weight:normal;color:#4a8fe0;letter-spacing:0.3px;transform:scaleX(0.8200)">Cancel</div>
<div class="a" style="left:188.5px;top:453px;width:815px;height:25px;background:#f9fafc;"></div>
<div class="a" style="left:188.5px;top:477px;width:815px;height:1px;background:#eef0f3;"></div>
<div class="a" style="left:193.4px;top:459.4px;width:12px;height:12px;background:#fff;border:1px solid #e3e5e8;border-radius:2px"></div>
<svg width="220" height="520"><polyline points="195.4,466.50 198.5,468.80 202.8,462.10" fill="none" stroke="#4a8fe0" stroke-width="1.35" stroke-linecap="round" stroke-linejoin="round"/></svg>
<div class="t" style="left:219.00px;top:456.00px;font-size:8.8px;line-height:20px;font-weight:normal;color:#5a5e63;letter-spacing:0.3px;transform:scaleX(0.8000)">VACULIK Martin</div>
<div class="t" style="left:314.40px;top:456.00px;font-size:8.8px;line-height:20px;font-weight:normal;color:#5a5e63;letter-spacing:0.3px;transform:scaleX(0.8300)">USD</div>
<div class="t" style="left:358.40px;top:456.00px;font-size:8.8px;line-height:20px;font-weight:normal;color:#5a5e63;letter-spacing:0.3px;transform:scaleX(0.7922)">8,500.00</div>
<div class="t" style="left:417.40px;top:456.00px;font-size:8.8px;line-height:20px;font-weight:normal;color:#e3961f;letter-spacing:0.6px;-webkit-text-stroke:0.35px #e3961f;transform:scaleX(0.7821)">3.670</div>
<div class="t" style="left:451.00px;top:456.00px;font-size:8.8px;line-height:20px;font-weight:normal;color:#5a5e63;letter-spacing:0.3px;transform:scaleX(0.7921)">AED</div>
<div class="t" style="left:491.07px;top:456.00px;font-size:8.8px;line-height:20px;font-weight:normal;color:#5a5e63;letter-spacing:0.3px;transform:scaleX(0.7900)">31,195.00</div>
<div class="t" style="left:538.70px;top:456.00px;font-size:8.8px;line-height:20px;font-weight:normal;color:#5a5e63;letter-spacing:0.3px;transform:scaleX(0.8296)">Send 05/08/25 Arrive 06/08/25</div>
<div class="t" style="left:661.10px;top:456.00px;font-size:8.8px;line-height:20px;font-weight:normal;color:#5a5e63;letter-spacing:0.3px;transform:scaleX(0.8413)">Alex Lambert</div>
<div class="t" style="left:729.00px;top:456.00px;font-size:8.8px;line-height:20px;font-weight:normal;color:#5a5e63;letter-spacing:0.3px;transform:scaleX(0.7900)">USD 1.00</div>
<div class="t" style="left:777.70px;top:456.00px;font-size:8.8px;line-height:20px;font-weight:normal;color:#5a5e63;letter-spacing:0.3px;transform:scaleX(0.7806)">SWIFT</div>
<div class="t" style="left:841.50px;top:456.00px;font-size:8.8px;line-height:20px;font-weight:normal;color:#e3961f;letter-spacing:0.3px;transform:scaleX(0.8342)">New</div>
<div class="t" style="left:938.70px;top:456.00px;font-size:8.8px;line-height:20px;font-weight:normal;color:#4a8fe0;letter-spacing:0.3px;transform:scaleX(0.8200)">Cancel</div>
<svg width="1024" height="520"><g fill="none" stroke="#8dbaee" stroke-width="0.95"><rect x="905.6" y="211.30" width="7.8" height="9.6" rx="1.2"/><line x1="907.4" y1="213.70" x2="911.6" y2="213.70"/><line x1="907.4" y1="215.50" x2="911.6" y2="215.50"/><line x1="907.4" y1="217.40" x2="911.6" y2="217.40"/></g><rect x="908" y="210.00" width="2.9" height="1.6" fill="#8dbaee"/><g fill="none" stroke="#8dbaee" stroke-width="0.95"><rect x="905.6" y="236.30" width="7.8" height="9.6" rx="1.2"/><line x1="907.4" y1="238.70" x2="911.6" y2="238.70"/><line x1="907.4" y1="240.50" x2="911.6" y2="240.50"/><line x1="907.4" y1="242.40" x2="911.6" y2="242.40"/></g><rect x="908" y="235.00" width="2.9" height="1.6" fill="#8dbaee"/><polyline points="990.4,239.30 993.6,242.40 996.8,239.30" fill="none" stroke="#4a8fe0" stroke-width="1.15"/><g fill="none" stroke="#8dbaee" stroke-width="0.95"><rect x="905.6" y="261.30" width="7.8" height="9.6" rx="1.2"/><line x1="907.4" y1="263.70" x2="911.6" y2="263.70"/><line x1="907.4" y1="265.50" x2="911.6" y2="265.50"/><line x1="907.4" y1="267.40" x2="911.6" y2="267.40"/></g><rect x="908" y="260.00" width="2.9" height="1.6" fill="#8dbaee"/><g fill="none" stroke="#8dbaee" stroke-width="0.95"><rect x="905.6" y="286.30" width="7.8" height="9.6" rx="1.2"/><line x1="907.4" y1="288.70" x2="911.6" y2="288.70"/><line x1="907.4" y1="290.50" x2="911.6" y2="290.50"/><line x1="907.4" y1="292.40" x2="911.6" y2="292.40"/></g><rect x="908" y="285.00" width="2.9" height="1.6" fill="#8dbaee"/><g fill="none" stroke="#8dbaee" stroke-width="0.95"><rect x="905.6" y="311.30" width="7.8" height="9.6" rx="1.2"/><line x1="907.4" y1="313.70" x2="911.6" y2="313.70"/><line x1="907.4" y1="315.50" x2="911.6" y2="315.50"/><line x1="907.4" y1="317.40" x2="911.6" y2="317.40"/></g><rect x="908" y="310.00" width="2.9" height="1.6" fill="#8dbaee"/><g fill="none" stroke="#8dbaee" stroke-width="0.95"><rect x="905.6" y="336.30" width="7.8" height="9.6" rx="1.2"/><line x1="907.4" y1="338.70" x2="911.6" y2="338.70"/><line x1="907.4" y1="340.50" x2="911.6" y2="340.50"/><line x1="907.4" y1="342.40" x2="911.6" y2="342.40"/></g><rect x="908" y="335.00" width="2.9" height="1.6" fill="#8dbaee"/><polyline points="990.4,339.30 993.6,342.40 996.8,339.30" fill="none" stroke="#4a8fe0" stroke-width="1.15"/><g fill="none" stroke="#8dbaee" stroke-width="0.95"><rect x="905.6" y="361.30" width="7.8" height="9.6" rx="1.2"/><line x1="907.4" y1="363.70" x2="911.6" y2="363.70"/><line x1="907.4" y1="365.50" x2="911.6" y2="365.50"/><line x1="907.4" y1="367.40" x2="911.6" y2="367.40"/></g><rect x="908" y="360.00" width="2.9" height="1.6" fill="#8dbaee"/><g fill="none" stroke="#8dbaee" stroke-width="0.95"><rect x="905.6" y="386.30" width="7.8" height="9.6" rx="1.2"/><line x1="907.4" y1="388.70" x2="911.6" y2="388.70"/><line x1="907.4" y1="390.50" x2="911.6" y2="390.50"/><line x1="907.4" y1="392.40" x2="911.6" y2="392.40"/></g><rect x="908" y="385.00" width="2.9" height="1.6" fill="#8dbaee"/><g fill="none" stroke="#8dbaee" stroke-width="0.95"><rect x="905.6" y="411.30" width="7.8" height="9.6" rx="1.2"/><line x1="907.4" y1="413.70" x2="911.6" y2="413.70"/><line x1="907.4" y1="415.50" x2="911.6" y2="415.50"/><line x1="907.4" y1="417.40" x2="911.6" y2="417.40"/></g><rect x="908" y="410.00" width="2.9" height="1.6" fill="#8dbaee"/><g fill="none" stroke="#8dbaee" stroke-width="0.95"><rect x="905.6" y="436.30" width="7.8" height="9.6" rx="1.2"/><line x1="907.4" y1="438.70" x2="911.6" y2="438.70"/><line x1="907.4" y1="440.50" x2="911.6" y2="440.50"/><line x1="907.4" y1="442.40" x2="911.6" y2="442.40"/></g><rect x="908" y="435.00" width="2.9" height="1.6" fill="#8dbaee"/><g fill="none" stroke="#8dbaee" stroke-width="0.95"><rect x="905.6" y="461.30" width="7.8" height="9.6" rx="1.2"/><line x1="907.4" y1="463.70" x2="911.6" y2="463.70"/><line x1="907.4" y1="465.50" x2="911.6" y2="465.50"/><line x1="907.4" y1="467.40" x2="911.6" y2="467.40"/></g><rect x="908" y="460.00" width="2.9" height="1.6" fill="#8dbaee"/></svg>
<div class="a" style="left:188.5px;top:478px;width:815px;height:25px;background:#e2effc;border-top:1px solid #e4ebf3"></div>
<div class="a" style="left:193.4px;top:484.4px;width:12px;height:12px;background:#fff;border:1px solid #e3e5e8;border-radius:2px"></div>
<div class="t" style="left:219.40px;top:481.00px;font-size:8.8px;line-height:20px;font-weight:normal;color:#4a8fe0;letter-spacing:0.3px;transform:scaleX(0.8380)">04 payments in July 2025 Directors Salaries</div>
<div class="t" style="left:626.00px;top:481.00px;font-size:8.8px;line-height:20px;font-weight:normal;color:#5a5e63;letter-spacing:0.3px;transform:scaleX(0.8171)">Created by Alex Lambert on 27/06/2025 at 15:19 | Checksum 100,682.67 |</div>
<div class="t" style="left:883.10px;top:481.00px;font-size:8.8px;line-height:20px;font-weight:normal;color:#4a8fe0;letter-spacing:0.3px;transform:scaleX(0.8339)">Download Changlog</div>
<div class="a" style="left:0px;top:584.5px;width:1024px;height:40px;background:#ffffff;box-shadow:0 -2px 9px rgba(40,50,70,0.07),0 -1px 1px rgba(40,50,70,0.04)"></div>
<div class="t" style="left:742.25px;top:595.00px;font-size:8.8px;line-height:20px;font-weight:normal;color:#6b6f74;letter-spacing:0.3px;transform:scaleX(0.8462)">Total Settlement</div>
<div class="t" style="left:802.90px;top:596.00px;font-size:10.1px;line-height:20px;font-weight:bold;color:#e3961f;letter-spacing:0.7px;transform:scaleX(0.8270)">AED 407519.00</div>
<div class="a" style="left:879.5px;top:592.3px;width:91px;height:24.1px;background:#4a8fe0;border-radius:2.5px"></div>
<div class="t" style="left:894.20px;top:595.00px;font-size:8.3px;line-height:20px;font-weight:normal;color:#ffffff;letter-spacing:1.0px;-webkit-text-stroke:0.25px #ffffff;transform:scaleX(0.8008)">VIEW SUMMARY</div>
<div class="a" style="left:979.4px;top:592.5px;width:24.9px;height:24.2px;background:#f6f7f9;border-radius:2px;box-shadow:0 1px 2px rgba(0,0,0,0.10)"></div>
<svg width="1024" height="624"><g fill="#55585c"><circle cx="992.3" cy="600.1" r="1.2"/><circle cx="992.3" cy="604.6" r="1.2"/><circle cx="992.3" cy="609.1" r="1.2"/></g></svg>
</div></body></html>
